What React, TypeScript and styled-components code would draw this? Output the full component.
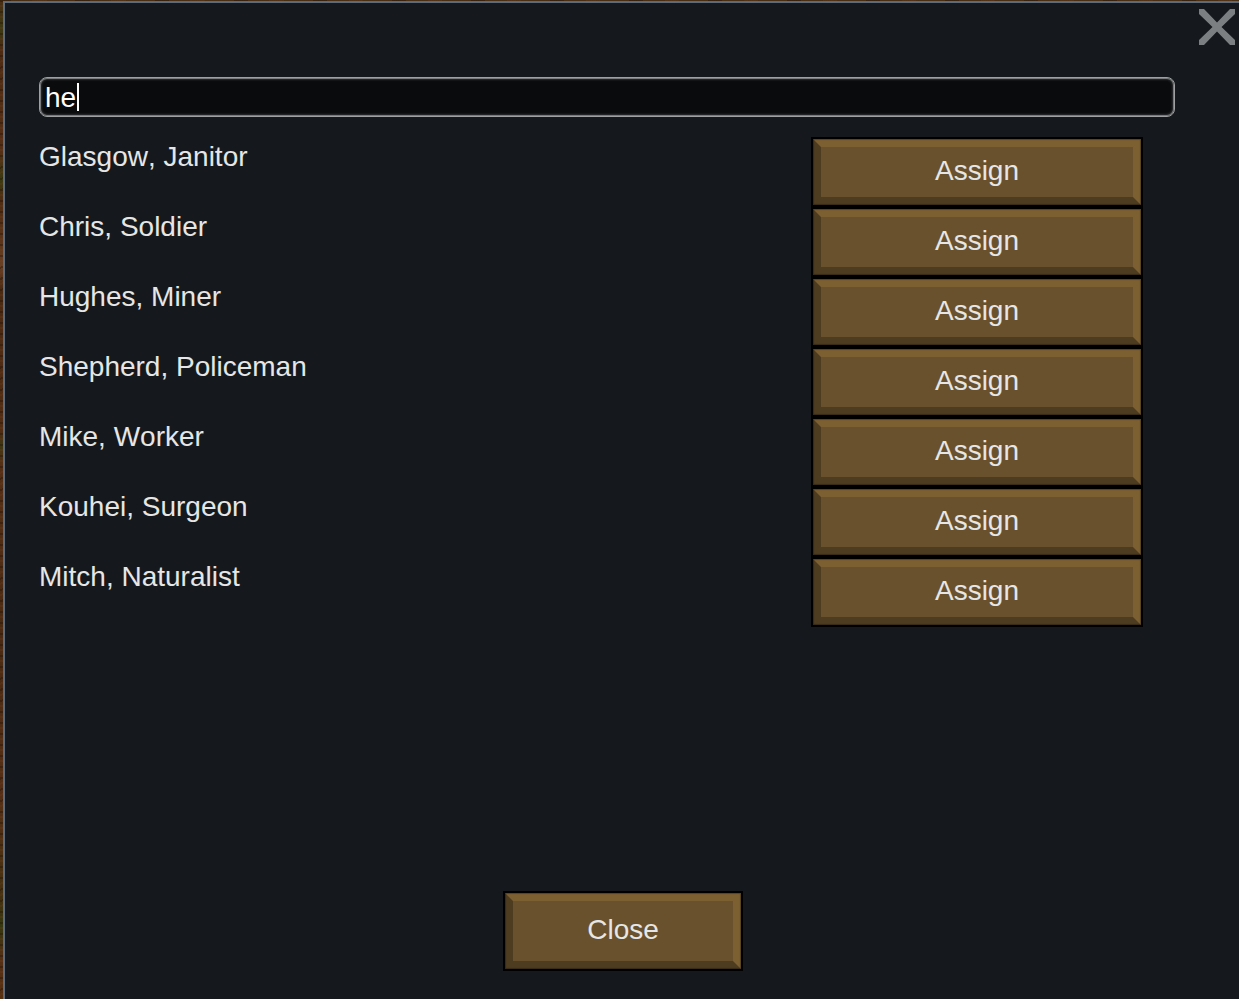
import React, { useLayoutEffect, useState } from "react";
import styled, { createGlobalStyle } from "styled-components";

const FONT = '"Liberation Sans", Arial, sans-serif';

const GlobalStyle = createGlobalStyle`
  *, *::before, *::after { box-sizing: border-box; }
  html, body, #root { height: 100%; }
  body {
    margin: 0;
    overflow: hidden;
    font: 28px/32px ${FONT};
    font-kerning: none;
    color: #e6e6e6;
  }
`;

const Terrain = styled.div`
  display: flex;
  min-height: 100%;
  padding: 1px 0 0 3px;
  background:
    repeating-linear-gradient(172deg, rgba(30, 14, 4, 0.35) 0 2px, transparent 2px 5px, rgba(120, 70, 35, 0.2) 5px 7px, transparent 7px 11px),
    linear-gradient(180deg, #4a2e14 0, #3d3a12 30px, #4d2b12 50px, #552f15 150px, #3b3a10 180px, #502c12 200px, #5b3419 240px, #6a4024 265px, #4b2a12 290px, #522d13 430px, #3f3812 445px, #552f15 465px, #4a2a12 640px, #552f15 800px, #44310f 900px, #36380f 925px, #552f15 960px, #57300f 100%);
`;

const Dialog = styled.section`
  position: relative;
  flex: 1;
  display: flex;
  flex-direction: column;
  padding: 74px 64px 28px 34px;
  border: solid #5d6a7a;
  border-width: 2px 0 0 2px;
  background: #15191d;
`;

const DismissButton = styled.button`
  position: absolute;
  top: 6px;
  right: 4px;
  width: 36px;
  height: 36px;
  padding: 0;
  border: 0;
  background: none;
  color: #7c7f82;
  cursor: pointer;

  svg { display: block; }
`;

const SearchField = styled.div`
  position: relative;
  height: 40px;
`;

const SearchInput = styled.input`
  display: block;
  width: 100%;
  height: 100%;
  padding: 2px 5px 0;
  border: 1px solid #9fa0a1;
  border-radius: 8px;
  outline: 0;
  background: #0a0b0d;
  box-shadow: inset 0 0 0 1px #77797a, inset 0 0 2px 2px #2c2e30;
  color: #fff;
  caret-color: transparent;
  font: inherit;
  font-kerning: none;
`;

const Caret = styled.span`
  position: absolute;
  top: 6px;
  width: 2px;
  height: 28px;
  background: #fff;
  pointer-events: none;
`;

const ColonistList = styled.ul`
  flex: 1;
  margin: 20px 0 0;
  padding: 0 32px 0 0;
  list-style: none;
`;

const ColonistRow = styled.li`
  display: grid;
  grid-template-columns: 193fr 83fr;
  height: 70px;
`;

const ColonistName = styled.span`
  padding-top: 4px;
`;

const BevelButton = styled.button<{ $wide?: boolean }>`
  position: relative;
  width: ${(p) => (p.$wide ? "100%" : "240px")};
  height: ${(p) => (p.$wide ? "70px" : "80px")};
  padding: 0;
  border: 2px solid #000;
  background: #69512d;
  color: inherit;
  font: inherit;
  cursor: pointer;

  &::after {
    content: "";
    position: absolute;
    inset: 0;
    box-shadow: inset 0 0 1px 1px rgba(0, 0, 0, 0.3);
  }
`;

const BevelFace = styled.span`
  display: flex;
  align-items: center;
  justify-content: center;
  height: 100%;
  padding-bottom: 2px;
  border: 8px solid;
  border-color: #7d6032 #7d6032 #4e3c20 #4e3c20;
`;

const Footer = styled.footer`
  display: flex;
  justify-content: center;
  padding-left: 32px;
`;

const colonists = [
  { name: "Glasgow", role: "Janitor" },
  { name: "Chris", role: "Soldier" },
  { name: "Hughes", role: "Miner" },
  { name: "Shepherd", role: "Policeman" },
  { name: "Mike", role: "Worker" },
  { name: "Kouhei", role: "Surgeon" },
  { name: "Mitch", role: "Naturalist" },
];

function measure(text: string) {
  const ctx = document.createElement("canvas").getContext("2d");
  if (!ctx) return 0;
  ctx.font = `28px ${FONT}`;
  return Math.round(ctx.measureText(text).width);
}

export default function App() {
  const [query, setQuery] = useState("he");
  const [caretX, setCaretX] = useState(0);

  useLayoutEffect(() => setCaretX(7 + measure(query)), [query]);

  return (
    <>
      <GlobalStyle />
      <Terrain>
        <Dialog role="dialog" aria-label="Assign colonist">
          <DismissButton type="button" aria-label="Dismiss">
            <svg width="36" height="36" viewBox="0 0 36 36" fill="currentColor" aria-hidden="true">
              <path d="M0 0H5L18 13.500L31 0H36V5L22.500 18L36 31V36H31L18 22.500L5 36H0V31L13.500 18L0 5Z" />
            </svg>
          </DismissButton>
          <SearchField>
            <SearchInput
              type="text"
              aria-label="Search"
              value={query}
              onChange={(e) => setQuery(e.target.value)}
            />
            <Caret style={{ left: caretX }} />
          </SearchField>
          <ColonistList>
            {colonists.map(({ name, role }) => (
              <ColonistRow key={name}>
                <ColonistName>{`${name}, ${role}`}</ColonistName>
                <BevelButton type="button" $wide aria-label={`Assign ${name}`}>
                  <BevelFace>Assign</BevelFace>
                </BevelButton>
              </ColonistRow>
            ))}
          </ColonistList>
          <Footer>
            <BevelButton type="button">
              <BevelFace>Close</BevelFace>
            </BevelButton>
          </Footer>
        </Dialog>
      </Terrain>
    </>
  );
}
